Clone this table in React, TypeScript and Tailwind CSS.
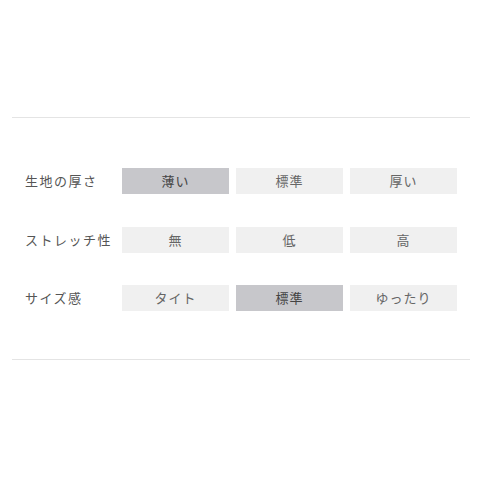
const rows = [
  { label: '生地の厚さ', options: ['薄い', '標準', '厚い'], selected: 0 },
  { label: 'ストレッチ性', options: ['無', '低', '高'], selected: -1 },
  { label: 'サイズ感', options: ['タイト', '標準', 'ゆったり'], selected: 1 },
]

export default function App() {
  return (
    <div
      className="w-[480px] h-[480px] bg-white pt-[117px]"
      style={{ fontFamily: '"Noto Sans CJK JP", "Noto Sans", sans-serif' }}
    >
      <div className="ml-3 mr-[10px] border-t border-[#e4e4e4] border-b pt-[50px] pb-[48px]">
        <div className="flex flex-col gap-[32.5px] pl-[13px]">
          {rows.map((row) => (
            <div key={row.label} className="flex items-center">
              <div className="w-[97px] text-[13px] tracking-[1.5px] text-[#555]">{row.label}</div>
              <div className="flex gap-[7px]">
                {row.options.map((opt, i) => (
                  <div
                    key={opt + i}
                    className={
                      i === row.selected
                        ? 'w-[107px] h-[26px] flex items-center justify-center bg-[#c7c7cb] text-[13px] tracking-[1px] text-[#444]'
                        : 'w-[107px] h-[26px] flex items-center justify-center bg-[#f0f0f0] text-[13px] tracking-[1px] text-[#666]'
                    }
                  >
                    {opt}
                  </div>
                ))}
              </div>
            </div>
          ))}
        </div>
      </div>
    </div>
  )
}
